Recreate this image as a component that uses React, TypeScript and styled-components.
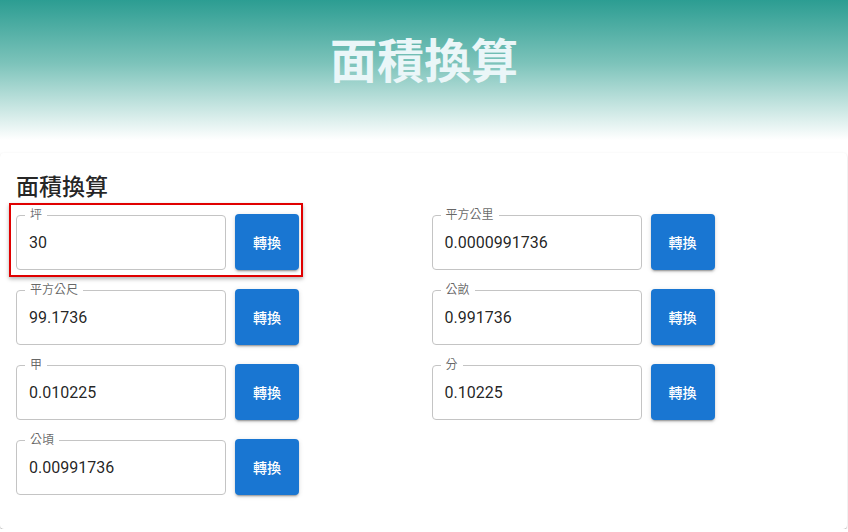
import styled, { createGlobalStyle } from "styled-components";

type Unit = {
  label: string;
  value: string;
  highlight?: boolean;
};

const units: Unit[] = [
  { label: "坪", value: "30", highlight: true },
  { label: "平方公里", value: "0.0000991736" },
  { label: "平方公尺", value: "99.1736" },
  { label: "公畝", value: "0.991736" },
  { label: "甲", value: "0.010225" },
  { label: "分", value: "0.10225" },
  { label: "公頃", value: "0.00991736" },
];

const GlobalStyle = createGlobalStyle`
  * { box-sizing: border-box; }
  body {
    margin: 0;
    background: #fff;
    font-family: Roboto, "Noto Sans CJK TC", sans-serif;
    color: rgba(0, 0, 0, 0.87);
  }
`;

const App = () => {
  return (
    <>
      <GlobalStyle />
      <Header>
        <HeaderTitle>面積換算</HeaderTitle>
      </Header>

      {/* 換算卡片 */}
      <Card>
        <CardTitle>面積換算</CardTitle>
        <Grid>
          {units.map((u) => (
            <Row key={u.label}>
              <Field>
                <Legend>{u.label}</Legend>
                <Value>{u.value}</Value>
              </Field>
              <ConvertButton>轉換</ConvertButton>
              {u.highlight && <Highlight />}
            </Row>
          ))}
        </Grid>
      </Card>
    </>
  );
};

export default App;

const Header = styled.header`
  height: 140px;
  padding-bottom: 26px;
  display: flex;
  align-items: center;
  justify-content: center;
  background: linear-gradient(to bottom, #2c9d92 0%, #7cc3ba 45%, #ffffff 100%);
`;

const HeaderTitle = styled.h1`
  margin: 0;
  font-family: "Noto Sans CJK TC", sans-serif;
  font-size: 47px;
  font-weight: 700;
  line-height: 1;
  color: #eaf6f8;
`;

const Card = styled.section`
  margin: 13px 1px 0 0;
  padding: 16px 16px 34px;
  background: #fff;
  border-radius: 4px;
  box-shadow: 0px 2px 1px -1px rgba(0, 0, 0, 0.2),
    0px 1px 1px 0px rgba(0, 0, 0, 0.14), 0px 1px 3px 0px rgba(0, 0, 0, 0.12);
`;

const CardTitle = styled.h2`
  margin: 0 0 8px;
  font-family: "Noto Sans CJK TC", sans-serif;
  font-size: 23px;
  font-weight: 500;
  line-height: 32px;
  color: rgba(0, 0, 0, 0.87);
`;

const Grid = styled.div`
  display: grid;
  grid-template-columns: 1fr 1fr;
  column-gap: 16px;
  row-gap: 14px;
`;

const Row = styled.div`
  position: relative;
  display: flex;
  align-items: flex-end;
  gap: 9px;
  width: fit-content;
`;

const Field = styled.fieldset`
  margin: 0;
  width: 210px;
  height: 61px;
  padding: 0 8px;
  border: 1px solid #c4c4c4;
  border-radius: 4px;
  min-width: 0;
`;

const Legend = styled.legend`
  padding: 0 5px;
  font-family: Roboto, "Noto Sans CJK TC", sans-serif;
  font-size: 12px;
  line-height: 12px;
  color: rgba(0, 0, 0, 0.6);
`;

const Value = styled.div`
  padding: 10px 4px 0;
  font-size: 16px;
  line-height: 24px;
  color: rgba(0, 0, 0, 0.87);
`;

const ConvertButton = styled.button`
  width: 64px;
  height: 56px;
  padding: 0;
  border: none;
  border-radius: 4px;
  background: #1976d2;
  color: #fff;
  font-family: Roboto, "Noto Sans CJK TC", sans-serif;
  font-size: 14px;
  font-weight: 500;
  cursor: pointer;
  box-shadow: 0px 3px 1px -2px rgba(0, 0, 0, 0.2),
    0px 2px 2px 0px rgba(0, 0, 0, 0.14), 0px 1px 5px 0px rgba(0, 0, 0, 0.12);
`;

const Highlight = styled.div`
  position: absolute;
  top: -6px;
  left: -7px;
  right: -4px;
  bottom: -7px;
  border: 2px solid #e00000;
  pointer-events: none;
  box-shadow: 0 2px 4px rgba(0, 0, 0, 0.3);
`;
